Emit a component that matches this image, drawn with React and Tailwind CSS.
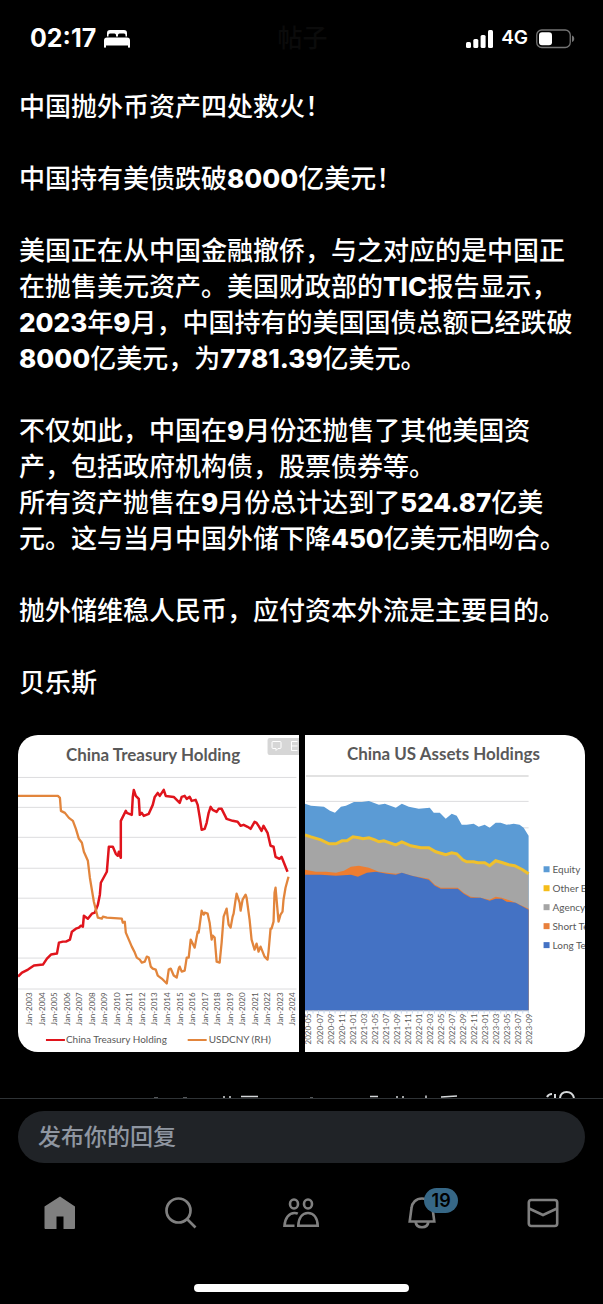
import React from 'react';

const YEARS = Array.from({ length: 22 }, (_, i) => 2003 + i);
const MONTHS = Array.from({ length: 21 }, (_, i) => {
  const m = 4 + i * 2;
  return `${2020 + Math.floor(m / 12)}-${String((m % 12) + 1).padStart(2, '0')}`;
});
const LEGEND = [
  ['Equity', '#5b9bd5'],
  ['Other Bonds', '#f5bd1a'],
  ['Agency Bonds', '#a5a5a5'],
  ['Short Term', '#e8803c'],
  ['Long Term', '#4472c4'],
];

const HOLDING =
  '18,977 22,973 28,970 31,968 34,966 43,965 47,959 51,955 57,954 59,943 63,942 66,942 70,940 72,932 76,929 79,928 81,926 83,927 84,916 88,919 92,914 95,913 98,905 100,895 101,883 107,872 109,847 113,847 116,854 118,856 119,852 121,858 121,821 126,811 127,813 132,815 133,797 134,790 136,796 139,799 140,815 142,813 144,816 149,814 153,805 155,797 158,793 160,796 164,790 166,796 174,797 180,803 182,797 185,796 187,799 190,797 192,801 196,800 198,805 200,817 202,830 205,829 207,823 209,813 211,807 213,810 217,812 219,809 222,809 224,813 227,819 233,821 238,822 241,826 244,825 248,827 251,829 255,822 257,823 259,826 262,831 264,826 268,833 271,846 274,847 276,857 280,859 282,857 284,862 288,872';
const USDCNY =
  '18,796 58,796 60,798 61,811 65,813 69,818 73,821 76,829 79,839 82,843 84,852 88,861 90,878 92,890 94,902 97,914 98,918 102,919 103,917 107,918 122,919 123,923 125,922 126,933 129,940 132,947 135,953 137,958 140,960 142,963 145,962 147,957 149,958 151,967 153,969 156,970 158,976 162,979 165,982 167,984 169,970 171,969 174,976 177,978 179,969 180,967 182,972 185,971 187,958 189,958 191,940 195,948 198,932 199,933 202,911 204,915 205,913 208,914 210,923 212,940 213,936 215,938 217,962 220,963 222,943 224,917 227,909 229,925 231,928 233,917 234,914 236,900 237,894 240,903 241,911 243,900 246,895 247,898 250,920 252,940 255,950 257,944 259,952 261,947 265,957 268,960 269,952 271,929 272,929 274,922 275,893 276,888 279,922 281,915 283,912 284,900 286,888 289,877';

const EQUITY_TOP =
  '304,804 310,806 323,807 329,811 334,813 340,807 345,806 353,802 361,802 368,801 378,805 384,804 395,808 401,804 408,807 418,809 429,808 433,813 439,813 445,819 451,814 456,816 461,825 466,825 473,824 478,827 484,825 489,828 495,823 500,823 506,825 513,824 519,825 523,828 528,836';
const OTHER_MID =
  '304,835 310,837 320,840 328,844 335,844 341,841 346,841 352,837 358,838 362,839 368,838 374,840 378,842 383,841 395,845 401,842 410,846 420,848 428,848 435,852 445,855 451,853 456,854 462,860 466,862 473,862 477,863 484,863 489,866 495,861 502,863 508,865 514,866 522,870 528,874';
const SHORT_TOP =
  '304,870 315,872 325,872 335,873 343,871 350,867 358,866 368,868 378,872 386,873 395,874 401,873 411,876 428,879 434,885 440,888 457,888 463,893 470,897 480,898 489,900 495,897 501,898 510,901 515,903 528,909';
const LONG_TOP =
  '304,875 320,875 335,876 350,875 357,877 366,873 375,872 386,874 395,875 401,873 411,876 428,880 434,886 440,889 457,889 463,894 470,898 480,898 489,901 495,899 501,899 506,902 515,903 528,910';

function N({ children }) {
  return <span className="font-extrabold">{children}</span>;
}

function TreasuryChart() {
  return (
    <svg viewBox="18 735 281 318" className="block h-auto w-full bg-white font-['Lato',sans-serif]" role="img" aria-label="China Treasury Holding">
      {[777, 807, 837, 868, 898, 928, 958, 989].map((y) => (
        <path key={y} d={`M18 ${y}.5H297`} stroke="#dcdcde" />
      ))}
      <rect x="268" y="738" width="34" height="17" rx="2" fill="#d6d6d6" />
      <path d="M273.500 741.500h7a1 1 0 0 1 1 1v5a1 1 0 0 1-1 1h-2l-2 2v-2h-3a1 1 0 0 1-1-1v-5a1 1 0 0 1 1-1zM298 741.500h-6v9h6M292 746h6" fill="none" stroke="#fff" />
      <text x="66" y="761" className="fill-[#595959] text-[17px] font-bold">China Treasury Holding</text>
      <polyline points={HOLDING} fill="none" stroke="#e0141c" strokeWidth="2.500" strokeLinejoin="round" />
      <polyline points={USDCNY} fill="none" stroke="#e2853c" strokeWidth="2.300" strokeLinejoin="round" />
      {YEARS.map((y, i) => (
        <text key={y} transform={`translate(${32 + i * 12.57} 1026) rotate(-90)`} className="fill-[#595959] text-[8px]">Jan-{y}</text>
      ))}
      <path d="M46 1040.500h19" stroke="#e0141c" strokeWidth="2" />
      <text x="66" y="1044" className="fill-[#595959] text-[10px]">China Treasury Holding</text>
      <path d="M188 1040.500h19" stroke="#e2853c" strokeWidth="2" />
      <text x="209" y="1044" className="fill-[#595959] text-[10px]">USDCNY (RH)</text>
    </svg>
  );
}

function AssetsChart() {
  return (
    <svg viewBox="304 735 281 318" className="block h-auto w-full bg-white font-['Lato',sans-serif]" role="img" aria-label="China US Assets Holdings">
      <path d="M305 776H528" stroke="#e2e2e2" strokeWidth="2" />
      <path d="M305 801.500H528M305 828H528" stroke="#dcdcde" />
      <text x="346" y="760" className="fill-[#595959] text-[17px] font-bold">China US Assets Holdings</text>
      <polygon points={`304,1011 ${EQUITY_TOP} 528,1011`} fill="#5b9bd5" />
      <polygon points={`304,1011 ${OTHER_MID} 528,1011`} fill="#a5a5a5" />
      <polyline points={OTHER_MID} fill="none" stroke="#f0c02c" strokeWidth="3" />
      <polygon points={`304,1011 ${SHORT_TOP} 528,1011`} fill="#ed7d31" />
      <polygon points={`304,1011 ${LONG_TOP} 528,1011`} fill="#4472c4" />
      <path d="M304 1011.500H528" stroke="#c5d5ea" />
      {Array.from({ length: 41 }, (_, i) => (
        <path key={i} d={`M${306.5 + i * 5.53} 1011v3`} stroke="#c5d5ea" />
      ))}
      {MONTHS.map((m, i) => (
        <text key={m} transform={`translate(${310.5 + i * 11.05} 1045) rotate(-90)`} className="fill-[#595959] text-[8px]">{m}</text>
      ))}
      {LEGEND.map(([name, color], i) => (
        <g key={name}>
          <rect x="543" y={866.5 + i * 19} width="6" height="6" fill={color} />
          <text x="552" y={873 + i * 19} className="fill-[#595959] text-[10px]">{name}</text>
        </g>
      ))}
    </svg>
  );
}

function NavButton({ label, children }) {
  return (
    <button type="button" aria-label={label} className="relative flex h-10 flex-1 items-center justify-center text-[#808080]">
      {children}
    </button>
  );
}

function StatusBar() {
  return (
    <header className="flex h-[77px] items-center justify-between pr-7 pl-[30px]">
      <div className="flex flex-1 items-center gap-2">
        <span className="text-[25px] font-bold">02:17</span>
        <svg width="26" height="18" viewBox="0 0 26 18" fill="currentColor" aria-hidden="true">
          <path d="M3 6.500V3a3 3 0 0 1 3-3h14a3 3 0 0 1 3 3v3.500h-1.500V5a1.500 1.500 0 0 0-1.500-1.500h-4.500A1.500 1.500 0 0 0 14 5v1.500h-2V5a1.500 1.500 0 0 0-1.500-1.500H6A1.500 1.500 0 0 0 4.500 5v1.500z" />
          <path d="M3 7.500h20a3 3 0 0 1 3 3V17a.8.8 0 0 1-.8.800h-.4a.8.8 0 0 1-.8-.8v-1.500H2V17a.8.8 0 0 1-.8.800H.8A.8.8 0 0 1 0 17v-6.500a3 3 0 0 1 3-3z" />
        </svg>
      </div>
      <h1 className="text-[25px] font-medium text-[#0b0b0b]">帖子</h1>
      <div className="flex flex-1 items-center justify-end gap-2">
        <svg width="27" height="18" viewBox="0 0 27 18" fill="currentColor" aria-hidden="true">
          <rect x="0" y="12" width="5" height="6" rx="1.500" />
          <rect x="7.300" y="9" width="5" height="9" rx="1.500" />
          <rect x="14.600" y="5" width="5" height="13" rx="1.500" />
          <rect x="22" y="0" width="5" height="18" rx="1.500" />
        </svg>
        <span className="text-[19px] font-semibold">4G</span>
        <svg width="39" height="20" viewBox="0 0 39 20" aria-hidden="true">
          <rect x=".75" y="1" width="33.500" height="17.500" rx="5" fill="none" stroke="#747474" strokeWidth="1.300" />
          <rect x="3" y="3.300" width="13" height="13" rx="3" fill="#fff" />
          <path d="M36 6.500c3 1 3 5.500 0 6.500z" fill="#747474" />
        </svg>
      </div>
    </header>
  );
}

export default function App() {
  return (
    <div className="flex min-h-screen flex-col bg-black font-['Inter','Noto_Sans_CJK_SC',sans-serif] text-white">
      <StatusBar />
      <main className="flex-1">
        <article className="px-[18px] pt-3">
          <div className="flex flex-col gap-9 pr-2 pl-px text-[26px] leading-9 font-medium">
            <p>中国抛外币资产四处救火！</p>
            <p>中国持有美债跌破<N>8000</N>亿美元！</p>
            <p>
              美国正在从中国金融撤侨，与之对应的是中国正在抛售美元资产。美国财政部的<N>TIC</N>报告显示，<N>2023</N>年<N>9</N>月，中国持有的美国国债总额已经跌破<N>8000</N>亿美元，为<N>7781.39</N>亿美元。
            </p>
            <p>
              不仅如此，中国在<N>9</N>月份还抛售了其他美国资产，包括政府机构债，股票债券等。
              <br />
              所有资产抛售在<N>9</N>月份总计达到了<N>524.87</N>亿美元。这与当月中国外储下降<N>450</N>亿美元相吻合。
            </p>
            <p>抛外储维稳人民币，应付资本外流是主要目的。</p>
            <p>贝乐斯</p>
          </div>
          <div className="mt-[34px] grid grid-cols-2 gap-[6px] overflow-hidden rounded-[20px]">
            <TreasuryChart />
            <AssetsChart />
          </div>
        </article>
        <svg viewBox="0 0 603 8" className="mt-[38px] block w-full" fill="none" stroke="#d5d8da" aria-hidden="true">
          <path d="M154 7.500h4M183 7.500h4M310 7.500h3" stroke="#55585a" />
          <path d="M224 6v2M230 6v2M370 6.500h8M397 6v2M403 6v2M426 5.500v2.500M441 7l16-1M241 6.500h17" strokeWidth="1.500" />
          <path d="M547 7c1-2 3-3 5-3M555 4v4M560 8c1-8 12-8 14 0" strokeWidth="2" />
        </svg>
      </main>
      <footer className="border-t border-[#2f3336]">
        <div className="px-[18px] pt-3">
          <input
            type="text"
            aria-label="发布你的回复"
            placeholder="发布你的回复"
            className="block h-[52px] w-full rounded-full bg-[#202327] px-5 text-[23px] font-medium text-white outline-none placeholder:text-[#8f96a1]"
          />
        </div>
        <nav className="mt-[30px] flex">
          <NavButton label="主页">
            <svg width="36" height="36" viewBox="0 0 36 36" fill="currentColor">
              <path d="M18 1.500 33 11.500V33a1 1 0 0 1-1 1H21.500V21.500h-7V34H3.500a1 1 0 0 1-1-1V11.500z" />
            </svg>
          </NavButton>
          <NavButton label="搜索">
            <svg width="36" height="36" viewBox="0 0 36 36" fill="none" stroke="currentColor" strokeWidth="2.700">
              <circle cx="15.500" cy="15.500" r="12" />
              <path d="m24 24 8.500 8.500" />
            </svg>
          </NavButton>
          <NavButton label="社群">
            <svg width="40" height="36" viewBox="0 0 40 36" fill="none" stroke="currentColor" strokeWidth="2.600">
              <ellipse cx="13" cy="9" rx="4" ry="4.500" />
              <ellipse cx="27" cy="9" rx="4" ry="4.500" />
              <path d="M13.500 30.700H3.500C4 23 8 18 13.500 18c1.200 0 2.300.2 3.300.7M27 18c-5.800 0-9.400 5-9.700 12.700h19.400C36.400 23 32.800 18 27 18z" />
            </svg>
          </NavButton>
          <NavButton label="通知">
            <svg width="36" height="36" viewBox="0 0 36 36" fill="none" stroke="currentColor" strokeWidth="2.600">
              <path d="M18 3.500c-6 0-10 4-10.500 9.500L5.700 26.500h24.600L28.500 13C28 7.500 24 3.500 18 3.500zM11.500 26.500c.5 4 3.200 5.800 6.500 5.800s6-1.800 6.500-5.800" />
            </svg>
            <span className="absolute bottom-5 left-1/2 ml-[2px] flex h-[25px] w-[34px] items-center justify-center rounded-full bg-[#366786] text-[18px] font-semibold text-black">19</span>
          </NavButton>
          <NavButton label="私信">
            <svg width="36" height="36" viewBox="0 0 36 36" fill="none" stroke="currentColor" strokeWidth="2.600">
              <rect x="3.800" y="5" width="28.400" height="26" rx="2.500" />
              <path d="M4 13.500 18 20l14-6.500" />
            </svg>
          </NavButton>
        </nav>
        <div className="mx-auto mt-[51px] mb-3 h-2 w-[215px] rounded-full bg-white" />
      </footer>
    </div>
  );
}
